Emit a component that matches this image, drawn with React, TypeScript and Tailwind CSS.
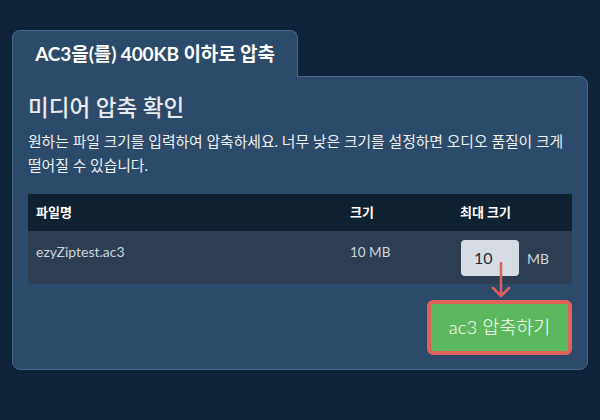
import React from "react";

const font = { fontFamily: "Lato, 'Noto Sans CJK KR', sans-serif" };

export default function App() {
  return (
    <div className="w-[600px] h-[420px] bg-[#112338] pt-[30px] px-[12px]" style={font}>
      {/* tab */}
      <div className="relative z-10 -mb-px w-[286px] h-[47px] flex items-center justify-center rounded-t-lg border border-b-0 border-[#4a6688] bg-[#2c4a69]">
        <span className="text-[19px] font-bold text-white tracking-[-0.1px]">AC3을(를) 400KB 이하로 압축</span>
      </div>

      {/* panel */}
      <div className="w-[576px] h-[294px] rounded-lg rounded-tl-none border border-[#4a6688] bg-[#2c4a69] px-[15px] pt-[16px]">
        <h2 className="text-[22.5px] leading-[30px] text-[#e8eaed] font-medium">미디어 압축 확인</h2>
        <p className="mt-[6px] text-[14.8px] leading-[24px] text-[#eef0f2] break-keep">
          원하는 파일 크기를 입력하여 압축하세요. 너무 낮은 크기를 설정하면 오디오 품질이 크게 떨어질 수 있습니다.
        </p>

        <div className="relative mt-[17px]">
          <div className="grid grid-cols-[314px_110px_120px] h-[37px] items-center bg-[#10212f] text-[13px] font-bold text-white">
            <div className="px-2">파일명</div>
            <div className="px-2">크기</div>
            <div className="px-2">최대 크기</div>
          </div>
          <div className="grid grid-cols-[314px_110px_120px] h-[53px] bg-[#2d3e52] text-[#cfd5dd]">
            <div className="px-2 pt-[11px] text-[14px] leading-5">ezyZiptest.ac3</div>
            <div className="px-2 pt-[11px] text-[13.5px] leading-5">10 MB</div>
            <div className="pl-[9px] pt-[9px] flex items-start gap-2">
              <div className="w-[58px] h-[36px] rounded-sm bg-[#d7dce4] flex items-center pl-[13px] text-[16px] text-[#1f2a36]">10</div>
              <span className="mt-[9px] text-[14px] leading-5">MB</span>
            </div>
          </div>

          {/* arrow */}
          <svg className="absolute left-[462px] top-[68px]" width="22" height="38" viewBox="0 0 22 38">
            <path d="M11 1 V34 M3 26 L11 34 L19 26" fill="none" stroke="#e0605a" strokeWidth="2.5" strokeLinecap="round" strokeLinejoin="round" />
          </svg>

          <div className="flex justify-end mt-[16px]">
            <button className="w-[145px] h-[55px] rounded-md border-[4px] border-[#e0605a] bg-[#5cb85c] text-white text-[18.5px] font-light">
              ac3 압축하기
            </button>
          </div>
        </div>
      </div>
    </div>
  );
}
